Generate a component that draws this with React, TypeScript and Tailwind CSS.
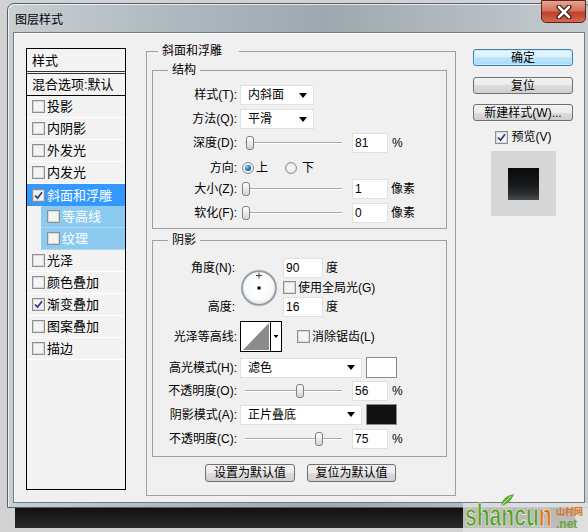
import React from 'react';

const btn =
  'flex items-center justify-center rounded-[3px] border border-[#707070] bg-[linear-gradient(#f2f2f2_0%,#ebebeb_50%,#dddddd_50%,#cfcfcf_100%)] text-[12px] leading-none text-black';

function Check({ checked = false }: { checked?: boolean }) {
  return (
    <span className="flex h-[13px] w-[13px] shrink-0 items-center justify-center border border-[#8e8f8f] bg-[#f4f4f4] shadow-[inset_0_0_0_1px_#d8d8d8]">
      {checked && (
        <svg width="9" height="9" viewBox="0 0 9 9">
          <path d="M1 4.5 L3.5 7.2 L8 1.2" fill="none" stroke="#2b3f7c" strokeWidth="1.8" />
        </svg>
      )}
    </span>
  );
}

function Radio({ on = false }: { on?: boolean }) {
  return (
    <span className="flex h-[12px] w-[12px] shrink-0 items-center justify-center rounded-full border border-[#8e8f8f] bg-[radial-gradient(circle,#f4f4f4_40%,#d5d5d5_100%)]">
      {on && <span className="h-[6px] w-[6px] rounded-full bg-[radial-gradient(circle_at_35%_35%,#7fd0ff_0%,#1b6fb8_55%,#0d3f6e_100%)]" />}
    </span>
  );
}

function Label({ children }: { children: React.ReactNode }) {
  return <span className="w-[84px] shrink-0 text-right leading-none">{children}</span>;
}

function Select({ value, w }: { value: string; w: string }) {
  return (
    <div className={`ml-[3px] flex h-[20px] items-center justify-between border border-[#e0e0e0] bg-white pl-[7px] pr-[6px] ${w}`}>
      <span className="text-[12px] leading-none">{value}</span>
      <span className="h-0 w-0 border-x-[4px] border-t-[5px] border-x-transparent border-t-black" />
    </div>
  );
}

function Slider({ pos }: { pos: string }) {
  return (
    <div className="relative ml-[3px] h-[20px] w-[105px] shrink-0">
      <div className="absolute left-[5px] top-[9px] h-[2px] w-[97px] border-t border-[#a8a8a8] bg-white" />
      <div className={`absolute top-[3px] h-[14px] w-[8px] rounded-[3px] border border-[#7f7f7f] bg-gradient-to-b from-white to-[#d4d4d4] ${pos}`} />
    </div>
  );
}

function Num({ value, w = 'w-[36px]', ml = 'ml-[7px]' }: { value: string; w?: string; ml?: string }) {
  return (
    <div className={`flex h-[20px] items-center border border-[#e0e0e0] bg-white pl-[2px] text-[12px] leading-none ${w} ${ml}`}>
      {value}
    </div>
  );
}

function ListItem({ text, checked = false }: { text: string; checked?: boolean }) {
  return (
    <div className="flex h-[22px] items-center gap-[2px] border-b border-white pl-[5px]">
      <Check checked={checked} />
      <span className="text-[13px] leading-none">{text}</span>
    </div>
  );
}

function SubItem({ text }: { text: string }) {
  return (
    <div className="ml-[14px] flex h-[22px] items-center gap-[2px] border-b border-[#a9d8f3] bg-[#8ccaef] pl-[6px] text-white">
      <Check />
      <span className="text-[13px] leading-none">{text}</span>
    </div>
  );
}

function Dial() {
  return (
    <svg width="38" height="38" viewBox="0 0 38 38" className="ml-[3px]">
      <defs>
        <radialGradient id="dialFill" cx="50%" cy="45%" r="55%">
          <stop offset="0%" stopColor="#ffffff" />
          <stop offset="75%" stopColor="#fafafa" />
          <stop offset="100%" stopColor="#dcdcdc" />
        </radialGradient>
      </defs>
      <circle cx="19" cy="19" r="17" fill="url(#dialFill)" stroke="#8f9ca6" strokeWidth="2" />
      <circle cx="19" cy="19" r="18.2" fill="none" stroke="#d4dbe0" strokeWidth="0.8" />
      <rect x="17.5" y="17.5" width="3" height="3" fill="#000" />
      <path d="M19 3.5 V9.5 M16 6.5 H22" stroke="#444" strokeWidth="1" />
    </svg>
  );
}

function Contour() {
  return (
    <svg width="42" height="31" viewBox="0 0 42 31" className="ml-[3px] shrink-0">
      <rect x="0.5" y="0.5" width="41" height="30" fill="#fff" stroke="#000" />
      <polygon points="3,29 29,2 29,29" fill="#8c8c8c" />
      <line x1="30.5" y1="0.5" x2="30.5" y2="30.5" stroke="#000" />
      <polygon points="33.5,14 38.5,14 36,17" fill="#000" />
    </svg>
  );
}

export default function App() {
  return (
    <div className="relative h-[532px] w-[588px] overflow-hidden bg-[#d2d2d2] font-['Liberation_Sans','Noto_Sans_CJK_SC',sans-serif] text-[12px] text-black">
      {/* window */}
      <div className="ml-[7px] mt-[3px] flex h-[505px] w-[583px] flex-col rounded-t-[7px] border border-[#56626a] bg-[linear-gradient(90deg,#c8cfd3_0%,#adb7bd_30%,#9ea8ae_55%,#b4bcc1_80%,#c6cdd1_100%)] shadow-[inset_1px_1px_0_rgba(255,255,255,0.7)]">
        <div className="flex h-[28px] items-start justify-between">
          <span className="ml-[7px] mt-[10px] text-[12px] leading-none text-black">图层样式</span>
          <div className="-mt-[4px] mr-[3px] flex h-[23px] w-[45px] items-center justify-center rounded-b-[5px] border border-[#5b2420] bg-[linear-gradient(#e8a493_0%,#d5705c_45%,#c0402a_55%,#d4684f_100%)]">
            <svg width="16" height="14" viewBox="0 0 16 14">
              <path d="M3 2 L13 12 M13 2 L3 12" stroke="#3a1a16" strokeWidth="5" strokeLinecap="round" />
              <path d="M3 2 L13 12 M13 2 L3 12" stroke="#fff" strokeWidth="2.6" strokeLinecap="round" />
            </svg>
          </div>
        </div>

        {/* client area */}
        <div className="ml-[5px] flex h-[471px] w-[572px] items-start border border-[#6f7d87] bg-[#f0f0f0] pl-[12px] pt-[11px] shadow-[inset_1px_1px_0_#ffffff]">
          {/* styles list */}
          <div className="mt-[4px] flex h-[442px] w-[100px] shrink-0 flex-col border border-black bg-[#f3f3f3]">
            <div className="flex h-[25px] items-center border-b-[3px] border-double border-[#333] pl-[5px] text-[13px] leading-none">
              样式
            </div>
            <div className="flex h-[22px] items-center border-b border-black pl-[5px] text-[13px] leading-none">
              混合选项:默认
            </div>
            <ListItem text="投影" />
            <ListItem text="内阴影" />
            <ListItem text="外发光" />
            <ListItem text="内发光" />
            <div className="flex h-[22px] items-center gap-[2px] bg-[#3399ff] pl-[5px] text-white">
              <Check checked />
              <span className="text-[13px] leading-none">斜面和浮雕</span>
            </div>
            <SubItem text="等高线" />
            <SubItem text="纹理" />
            <ListItem text="光泽" />
            <ListItem text="颜色叠加" />
            <ListItem text="渐变叠加" checked />
            <ListItem text="图案叠加" />
            <ListItem text="描边" />
          </div>

          {/* bevel & emboss */}
          <fieldset className="ml-[20px] w-[310px] shrink-0 border border-[#a0a0a0] pb-[13px] pl-[5px]">
            <legend className="ml-[6px] pl-[4px] pr-[17px] leading-[14px]">斜面和浮雕</legend>

            <fieldset className="mt-[5px] w-[295px] border border-[#a0a0a0] pb-[5px]">
              <legend className="ml-[15px] px-[4px] leading-[14px]">结构</legend>
              <div className="mt-[8px] flex h-[20px] items-center">
                <Label>样式(T):</Label>
                <Select value="内斜面" w="w-[74px]" />
              </div>
              <div className="mt-[4px] flex h-[20px] items-center">
                <Label>方法(Q):</Label>
                <Select value="平滑" w="w-[74px]" />
              </div>
              <div className="mt-[4px] flex h-[20px] items-center">
                <Label>深度(D):</Label>
                <Slider pos="left-[6px]" />
                <Num value="81" />
                <span className="ml-[4px] leading-none">%</span>
              </div>
              <div className="mt-[5px] flex h-[20px] items-center">
                <Label>方向:</Label>
                <span className="ml-[5px]">
                  <Radio on />
                </span>
                <span className="ml-[2px] leading-none">上</span>
                <span className="ml-[17px]">
                  <Radio />
                </span>
                <span className="ml-[5px] leading-none">下</span>
              </div>
              <div className="mt-[1px] flex h-[20px] items-center">
                <Label>大小(Z):</Label>
                <Slider pos="left-[2px]" />
                <Num value="1" />
                <span className="ml-[3px] leading-none">像素</span>
              </div>
              <div className="mt-[4px] flex h-[20px] items-center">
                <Label>软化(F):</Label>
                <Slider pos="left-[2px]" />
                <Num value="0" />
                <span className="ml-[3px] leading-none">像素</span>
              </div>
            </fieldset>

            <fieldset className="mt-[4px] w-[295px] border border-[#a0a0a0] pb-[7px]">
              <legend className="ml-[15px] px-[4px] leading-[14px]">阴影</legend>
              <div className="mt-[11px] grid grid-cols-[84px_46px_auto] grid-rows-[20px_19px_20px]">
                <span className="self-center pr-[2px] text-right leading-none">角度(N):</span>
                <div className="row-span-3 self-center">
                  <Dial />
                </div>
                <div className="flex items-center">
                  <Num value="90" w="w-[40px]" ml="ml-0" />
                  <span className="ml-[3px] leading-none">度</span>
                </div>
                <div className="col-start-3 flex items-center gap-[2px]">
                  <Check />
                  <span className="leading-none">使用全局光(G)</span>
                </div>
                <span className="col-start-1 self-center pr-[2px] text-right leading-none">高度:</span>
                <div className="col-start-3 flex items-center">
                  <Num value="16" w="w-[40px]" ml="ml-0" />
                  <span className="ml-[3px] leading-none">度</span>
                </div>
              </div>
              <div className="mt-[4px] flex h-[31px] items-center">
                <Label>光泽等高线:</Label>
                <Contour />
                <span className="ml-[15px]">
                  <Check />
                </span>
                <span className="ml-[2px] leading-none">消除锯齿(L)</span>
              </div>
              <div className="mt-[5px] flex h-[21px] items-center">
                <Label>高光模式(H):</Label>
                <Select value="滤色" w="w-[122px]" />
                <div className="ml-[4px] h-[21px] w-[31px] border border-[#8a8a8a] bg-white" />
              </div>
              <div className="mt-[3px] flex h-[20px] items-center">
                <Label>不透明度(O):</Label>
                <Slider pos="left-[56px]" />
                <Num value="56" />
                <span className="ml-[4px] leading-none">%</span>
              </div>
              <div className="mt-[3px] flex h-[21px] items-center">
                <Label>阴影模式(A):</Label>
                <Select value="正片叠底" w="w-[122px]" />
                <div className="ml-[4px] h-[21px] w-[31px] border border-[#8a8a8a] bg-[#111013]" />
              </div>
              <div className="mt-[4px] flex h-[20px] items-center">
                <Label>不透明度(C):</Label>
                <Slider pos="left-[75px]" />
                <Num value="75" />
                <span className="ml-[4px] leading-none">%</span>
              </div>
            </fieldset>

            <div className="mt-[7px] flex justify-center gap-[12px] pr-[6px]">
              <div className={`${btn} h-[18px] w-[90px]`}>设置为默认值</div>
              <div className={`${btn} h-[18px] w-[89px]`}>复位为默认值</div>
            </div>
          </fieldset>

          {/* right buttons */}
          <div className="ml-[17px] mt-[5px] flex w-[100px] shrink-0 flex-col items-center">
            <div className="flex h-[17px] w-full items-center justify-center rounded-[3px] border border-[#3c7fb1] bg-[linear-gradient(#eaf6fd_0%,#d9f0fc_50%,#bee6fd_50%,#a7d9f5_100%)] text-[12px] leading-none shadow-[inset_0_0_0_1px_#c6ecfb]">
              确定
            </div>
            <div className={`${btn} mt-[11px] h-[17px] w-full`}>复位</div>
            <div className={`${btn} mt-[10px] h-[17px] w-full`}>新建样式(W)...</div>
            <div className="mt-[9px] flex h-[14px] items-center gap-[4px]">
              <Check checked />
              <span className="leading-none">预览(V)</span>
            </div>
            <div className="mt-[7px] flex h-[65px] w-[65px] items-center justify-center bg-[#d6d6d6]">
              <div className="h-[32px] w-[31px] bg-[linear-gradient(#0a0a0a_0%,#161819_50%,#2c3033_82%,#464b4f_100%)]" />
            </div>
          </div>
        </div>
      </div>

      {/* shadow of window behind */}
      <div className="ml-[15px] h-[20px] w-[560px] bg-gradient-to-b from-[#111111] to-[#2b2b2b]" />

      {/* watermark */}
      <div className="absolute left-[463px] top-[503px] h-[29px] w-[125px] bg-[#e2e2e2]/80">
        <svg className="absolute left-[36px] -top-[10px]" width="16" height="14" viewBox="0 0 16 14">
          <path d="M2 13 C3 6 8 2 15 1 C13 7 9 11 2 13 Z" fill="#5fae2e" />
          <path d="M2 13 C6 9 9 6 12 3" stroke="#e8f5dc" strokeWidth="0.8" fill="none" />
        </svg>
        <span className="absolute left-[2px] top-[-5px] origin-left scale-x-[0.68] text-[31px] font-bold leading-[36px] text-[#5a9f27] [-webkit-text-stroke:0.6px_#ffffff]">
          shancu<span className="text-[#d8741c]">n</span>
        </span>
        <span className="absolute left-[93px] top-[5px] text-[9px] font-bold leading-none text-[#d8741c]">山村网</span>
        <span className="absolute left-[93px] top-[15px] text-[12px] font-bold leading-none text-[#6aa83a]">.net</span>
      </div>
    </div>
  );
}
